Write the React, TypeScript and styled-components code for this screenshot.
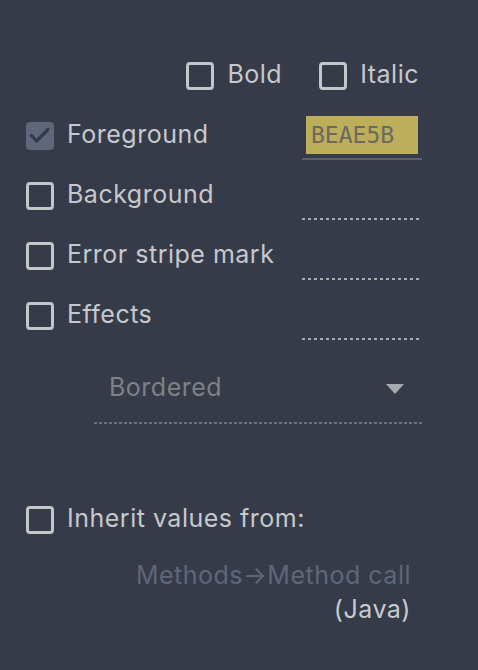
import React from 'react';
import styled, { createGlobalStyle } from 'styled-components';

const GlobalStyle = createGlobalStyle`
  html, body {
    margin: 0;
    padding: 0;
    background: #353b48;
  }
`;

const Panel = styled.div`
  width: 478px;
  height: 670px;
  box-sizing: border-box;
  padding: 46px 56px 0 26px;
  background: #353b48;
  color: #c7c8cc;
  font-family: Inter, 'Noto Sans', sans-serif;
  font-size: 25px;
  letter-spacing: 0.5px;
  overflow: hidden;
`;

const StyleRow = styled.div`
  height: 60px;
  display: flex;
  align-items: center;
  justify-content: flex-end;
  gap: 37px;
  padding-right: 3px;
`;

const Label = styled.label`
  display: flex;
  align-items: center;
  gap: 13px;
  white-space: nowrap;
`;

const Text = styled.span`
  line-height: 30px;
  padding-bottom: 4px;
`;

const Box = styled.span<{ $checked?: boolean }>`
  width: 28px;
  height: 28px;
  box-sizing: border-box;
  border-radius: 4px;
  border: ${(p) => (p.$checked ? 'none' : '3px solid #c5c6ca')};
  background: ${(p) => (p.$checked ? '#5f677b' : 'transparent')};
  display: flex;
  align-items: center;
  justify-content: center;
  flex-shrink: 0;
`;

const AttrRow = styled.div`
  height: 60px;
  display: grid;
  grid-template-columns: 1fr 120px;
  align-items: center;
`;

const Field = styled.div<{ $dotted?: boolean }>`
  height: 48px;
  box-sizing: border-box;
  padding: 4px 4px 10px;
  background: ${(p) =>
    p.$dotted
      ? 'repeating-linear-gradient(90deg, #a9abb1 0 3px, transparent 3px 6px) left bottom / 100% 2px no-repeat'
      : 'linear-gradient(#5f6064, #5f6064) left bottom / 100% 2px no-repeat'};
`;

const Swatch = styled.div`
  height: 38px;
  background: #bdae5b;
  color: #6b6a60;
  font-family: 'DejaVu Sans Mono', 'Liberation Mono', monospace;
  font-size: 23px;
  letter-spacing: 0;
  line-height: 38px;
  padding-left: 5px;
`;

const Dropdown = styled.div`
  margin: 8px 0 0 68px;
  height: 70px;
  display: flex;
  align-items: center;
  justify-content: space-between;
  padding: 0 18px 0 15px;
  color: #7f8186;
  background: repeating-linear-gradient(90deg, #6c7079 0 3px, transparent 3px 5px) left bottom / 100% 2px no-repeat;
`;

const Arrow = styled.span`
  width: 0;
  height: 0;
  border-left: 9px solid transparent;
  border-right: 9px solid transparent;
  border-top: 10px solid #a9aaae;
`;

const InheritRow = styled.div`
  height: 60px;
  margin-top: 66px;
  display: flex;
  align-items: center;
`;

const InheritFrom = styled.div`
  margin-top: 8px;
  padding-right: 11px;
  text-align: right;
  line-height: 34px;
`;

const Path = styled.div`
  color: #5e6779;
`;

const Lang = styled.div`
  color: #c9cacd;
`;

const Check = () => (
  <svg width="28" height="28" viewBox="0 0 28 28">
    <path
      d="M5.5 13.5 L10.5 19 L22 7.5"
      fill="none"
      stroke="#343a47"
      strokeWidth="3.2"
      strokeLinecap="round"
      strokeLinejoin="round"
    />
  </svg>
);

const CheckLabel = ({ text, checked }: { text: string; checked?: boolean }) => (
  <Label>
    <Box $checked={checked}>{checked && <Check />}</Box>
    <Text>{text}</Text>
  </Label>
);

const rows = ['Background', 'Error stripe mark', 'Effects'];

export default function App() {
  return (
    <>
      <GlobalStyle />
      <Panel>
        <StyleRow>
          <CheckLabel text="Bold" />
          <CheckLabel text="Italic" />
        </StyleRow>
        <AttrRow>
          <CheckLabel text="Foreground" checked />
          <Field>
            <Swatch>BEAE5B</Swatch>
          </Field>
        </AttrRow>
        {rows.map((r) => (
          <AttrRow key={r}>
            <CheckLabel text={r} />
            <Field $dotted />
          </AttrRow>
        ))}
        <Dropdown>
          <Text>Bordered</Text>
          <Arrow />
        </Dropdown>
        <InheritRow>
          <CheckLabel text="Inherit values from:" />
        </InheritRow>
        <InheritFrom>
          <Path>Methods→Method call</Path>
          <Lang>(Java)</Lang>
        </InheritFrom>
      </Panel>
    </>
  );
}
